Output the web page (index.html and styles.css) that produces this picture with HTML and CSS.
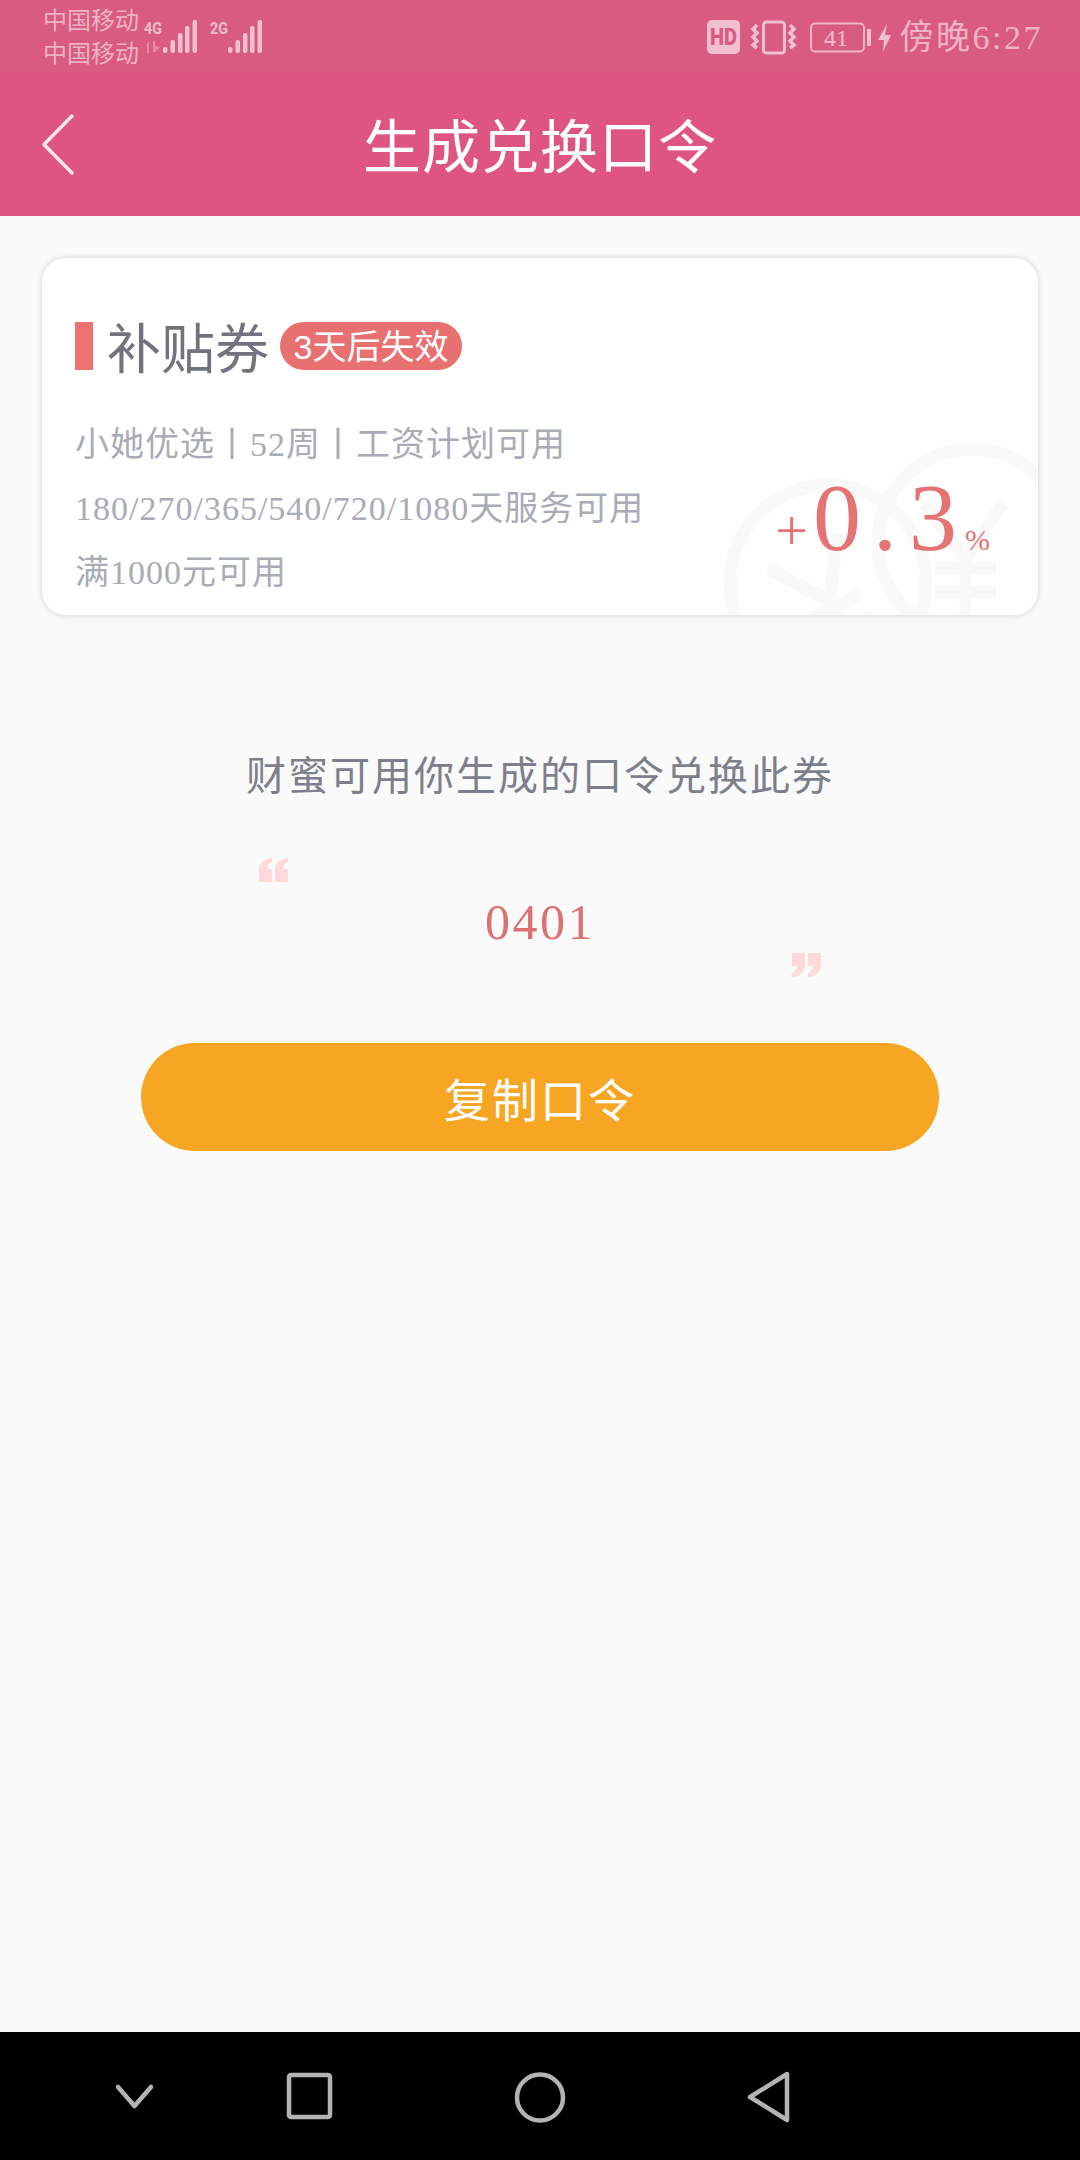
FILE: index.html
```html
<!DOCTYPE html>
<html lang="zh-CN">
<head>
<meta charset="utf-8">
<title>生成兑换口令</title>
<link rel="stylesheet" href="styles.css">
</head>
<body>
<div class="screen">
  <div class="statusbar">
    <div class="carriers"><span>中国移动</span><span>中国移动</span></div>
    <svg class="signal" viewBox="143 18 120 37" width="120" height="37">
      <g class="sb-fill">
        <text x="144" y="34" class="net" textLength="18" lengthAdjust="spacingAndGlyphs">4G</text>
        <text x="210" y="34" class="net" textLength="18" lengthAdjust="spacingAndGlyphs">2G</text>
        <rect x="163" y="47" width="4.5" height="6" rx="2"/><rect x="170.5" y="40" width="4.5" height="13" rx="2"/><rect x="178" y="33" width="4.5" height="20" rx="2"/><rect x="185" y="26" width="4.5" height="27" rx="2"/><rect x="192.500" y="20" width="4.500" height="33" rx="2"/>
        <rect x="228" y="47" width="4.5" height="6" rx="2"/><rect x="235.500" y="40" width="4.500" height="13" rx="2"/><rect x="243" y="33" width="4.500" height="20" rx="2"/><rect x="250" y="26" width="4.500" height="27" rx="2"/><rect x="257.500" y="20" width="4.500" height="33" rx="2"/>
      </g>
      <path class="sb-dim" d="M149 41v12h-2v-8l-2 2zM153 41h2v5l5 1-5 5h-2z"/>
    </svg>
    <div class="status-right">
      <svg class="sys" viewBox="707 18 186 38" width="186" height="38">
        <rect class="hd-bg" x="707" y="20" width="33" height="34" rx="5"/>
        <text x="710" y="45" class="hd" textLength="27" lengthAdjust="spacingAndGlyphs">HD</text>
        <rect class="sys-line" x="763.500" y="22" width="21" height="31" rx="3" stroke-width="3"/>
        <path class="sys-thin" d="M757 25l-4 4 4 4-4 4 4 4-4 4 4 3M790 25l4 4-4 4 4 4-4 4 4 4-4 3"/>
        <rect class="sys-batt" x="811" y="23.500" width="53" height="28" rx="4"/>
        <text x="824" y="46" class="batt">41</text>
        <rect class="sb-fill" x="867" y="29" width="4" height="17" rx="1"/>
        <path class="sb-fill" d="M887 24 878 40h6l-1 12 8-17h-6z"/>
      </svg>
      <span class="clock">傍晚6:27</span>
    </div>
  </div>
  <header class="header">
    <svg class="back" viewBox="0 0 34 62" width="34" height="62"><path d="M31 2 3 30.500 31 59"/></svg>
    <h1 class="title">生成兑换口令</h1>
  </header>
  <main class="main">
    <section class="card">
      <svg class="watermark" viewBox="700 430 338 185" width="338" height="185">
        <circle cx="828" cy="583" r="98"/>
        <g transform="rotate(-27 828 583)"><path d="M781 543 821 600 859 543M821 600V690M791 608H852M791 632H852"/></g>
        <circle cx="972" cy="543" r="94"/>
        <path d="M925 503 965 560 1003 503M965 560V640M935 568H996M935 592H996"/>
      </svg>
      <div class="card-head">
        <span class="mark"></span>
        <span class="card-title">补贴券</span>
        <span class="badge">3天后失效</span>
      </div>
      <div class="card-body">
        <div class="desc">
          <p>小她优选丨52周丨工资计划可用</p>
          <p>180/270/365/540/720/1080天服务可用</p>
          <p>满1000元可用</p>
        </div>
        <div class="rate"><span class="plus">+</span><span class="num">0.3</span><span class="pct">%</span></div>
      </div>
    </section>
    <p class="hint">财蜜可用你生成的口令兑换此券</p>
    <div class="code-box">
      <svg class="quote open" viewBox="0 0 29 24" width="29" height="24"><path d="M0 24V12C0 5 5 1 13 0V4C10 5 8 8 8 11H13V24ZM16 24V12C16 5 21 1 29 0V4C26 5 24 8 24 11H29V24Z"/></svg>
      <span class="code">0401</span>
      <svg class="quote close" viewBox="0 0 29 24" width="29" height="24"><path d="M29 0V12C29 19 24 23 16 24V20C19 19 21 16 21 13H16V0ZM13 0V12C13 19 8 23 0 24V20C3 19 5 16 5 13H0V0Z"/></svg>
    </div>
    <button class="copy" type="button">复制口令</button>
  </main>
  <nav class="navbar">
    <svg viewBox="0 0 1080 128" width="1080" height="128">
      <path d="M118 55 134.500 74 151 55"/>
      <rect x="289" y="43" width="41" height="42" rx="2"/>
      <circle cx="540" cy="65.500" r="23"/>
      <path d="M787 42V88L750 65Z"/>
    </svg>
  </nav>
</div>
</body>
</html>
```
FILE: styles.css
```css
* { box-sizing: border-box; }
html, body { margin: 0; padding: 0; }
body { font-family: "Liberation Serif", "Noto Sans CJK SC", serif; background: #fafafa; }
.screen { width: 1080px; height: 2160px; display: flex; flex-direction: column; overflow: hidden; }

.statusbar { height: 72px; background: #d95b80; display: flex; align-items: flex-start; padding: 0 37px 0 43px; color: rgba(255,255,255,.55); }
.carriers { display: flex; flex-direction: column; font-size: 24px; line-height: 33px; padding-top: 5px; width: 100px; }
.signal { margin-top: 18px; }
.sb-fill { fill: rgba(255,255,255,.62); }
.sb-dim { fill: rgba(255,255,255,.3); }
.net { font: 700 17px "Roboto", sans-serif; }
.status-right { margin-left: auto; display: flex; align-items: flex-start; }
.sys { margin-top: 18px; }
.hd-bg { fill: rgba(255,255,255,.62); }
.hd { font: 900 24px "Roboto", sans-serif; fill: #d95b80; }
.sys-line { fill: none; stroke: rgba(255,255,255,.62); }
.sys-thin { fill: none; stroke: rgba(255,255,255,.62); stroke-width: 3.5; }
.sys-batt { fill: none; stroke: rgba(255,255,255,.55); stroke-width: 2; }
.batt { font: 24px "Liberation Serif", serif; fill: rgba(255,255,255,.6); }
.clock { font-size: 34px; line-height: 38px; margin: 19px 0 0 7px; letter-spacing: 2.5px; }

.header { height: 144px; background: #de5680; display: flex; align-items: center; justify-content: center; position: relative; }
.back { position: absolute; left: 41px; top: 42px; }
.back path { fill: none; stroke: #fff; stroke-width: 3.5; stroke-linecap: round; stroke-linejoin: round; opacity: .85; }
.title { margin: 9px 0 0; font-size: 58px; font-weight: 400; letter-spacing: 1px; color: #fff; line-height: 1; }

.main { flex: 1; display: flex; flex-direction: column; align-items: center; padding-top: 42px; background: #fafafa; }
.card { width: 996px; height: 357px; background: #fff; border-radius: 24px; box-shadow: 0 0 6px rgba(0,0,0,.18); position: relative; overflow: hidden; padding: 64px 48px 0 33px; }
.watermark { position: absolute; right: 0; bottom: 0; }
.watermark circle, .watermark path { fill: none; stroke: #f9f9f9; stroke-width: 13; }
.card-head, .card-body { position: relative; }
.card-head { display: flex; align-items: center; height: 48px; }
.mark { width: 18px; height: 48px; background: #ec7272; }
.card-title { font-size: 54px; color: #71737f; margin: 9px 0 0 14px; line-height: 48px; }
.badge { margin-left: 11px; height: 48px; width: 182px; border-radius: 24px; background: #e97070; color: #fff; font: 34px/50px "Liberation Sans", "Noto Sans CJK SC", sans-serif; text-align: center; }
.card-body { display: flex; justify-content: space-between; align-items: flex-end; margin-top: 43px; }
.desc p { margin: 0; font-size: 34px; line-height: 64px; letter-spacing: 1px; color: #a9abb7; }
.rate { color: #e57373; display: flex; align-items: baseline; margin-bottom: 37px; }
.plus { font-size: 58px; }
.num { font-size: 96px; line-height: 100px; letter-spacing: 12px; margin-left: 5px; }
.pct { font-size: 30px; margin-left: -4px; }

.hint { margin: 137px 0 0; font-size: 40px; line-height: 50px; letter-spacing: 2px; color: #7d7f8c; }
.code-box { width: 562px; height: 119px; margin-top: 56px; display: grid; position: relative; }
.quote { fill: #ffd9d9; position: absolute; }
.open { left: 0; top: 0; }
.close { right: 0; bottom: 0; }
.code { justify-self: center; align-self: center; font-size: 50px; letter-spacing: 2.5px; color: #dd7070; margin-top: 9px; }
.copy { width: 798px; height: 108px; margin-top: 66px; border: 0; border-radius: 54px; background: #f6a623; color: #fff; font: 46px "Liberation Serif", "Noto Sans CJK SC", serif; letter-spacing: 2px; padding: 0; }

.navbar { height: 128px; background: #000; }
.navbar svg { display: block; }
.navbar path, .navbar rect, .navbar circle { fill: none; stroke: #b3b3b3; stroke-width: 4.500; stroke-linecap: round; stroke-linejoin: round; }
```
